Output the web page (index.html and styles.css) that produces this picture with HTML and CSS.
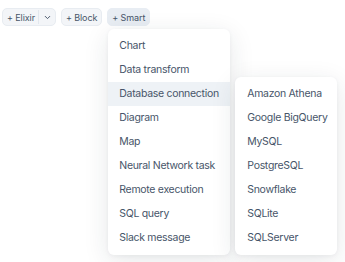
FILE: index.html
```html
<!DOCTYPE html>
<html lang="en">
<head>
    <meta charset="UTF-8">
    <meta name="viewport" content="width=device-width, initial-scale=1.0">
    <title>Insert cell</title>
    <link rel="stylesheet" href="styles.css">
</head>
<body>
    <div class="toolbar">
        <div class="btn split">
            <span class="btn-label">+ Elixir</span>
            <span class="divider"></span>
            <span class="chevron">
                <svg width="9" height="9" viewBox="0 0 24 24" fill="none" stroke="currentColor" stroke-width="2.6" stroke-linecap="round" stroke-linejoin="round"><polyline points="6 9 12 15 18 9"></polyline></svg>
            </span>
        </div>
        <div class="btn">+ Block</div>
        <div class="smart">
            <div class="btn active">+ Smart</div>
            <ul class="menu main-menu">
                <li>Chart</li>
                <li>Data transform</li>
                <li class="selected">Database connection</li>
                <li>Diagram</li>
                <li>Map</li>
                <li>Neural Network task</li>
                <li>Remote execution</li>
                <li>SQL query</li>
                <li>Slack message</li>
            </ul>
            <ul class="menu sub-menu">
                <li>Amazon Athena</li>
                <li>Google BigQuery</li>
                <li>MySQL</li>
                <li>PostgreSQL</li>
                <li>Snowflake</li>
                <li>SQLite</li>
                <li>SQLServer</li>
            </ul>
        </div>
    </div>
</body>
</html>
```

FILE: styles.css
```css
html, body {
    height: 100%;
}

body {
    font-family: 'Inter', sans-serif;
    margin: 0;
    padding: 8px 0 0 2px;
    box-sizing: border-box;
    min-height: 262px;
    background-color: #ffffff;
    color: #475569;
    overflow: hidden;
}

.toolbar {
    display: flex;
    align-items: flex-start;
    gap: 5px;
}

.btn {
    display: flex;
    align-items: center;
    height: 16px;
    padding: 0 4px;
    font-size: 9px;
    letter-spacing: -0.1px;
    color: #475569;
    background-color: #f3f5f8;
    border: 1px solid #e8ecf1;
    border-radius: 5px;
}

.btn.active {
    background-color: #e8edf3;
    border-color: #e8edf3;
}

.split {
    padding-right: 1px;
}

.divider {
    width: 1px;
    height: 14px;
    background-color: #e2e7ee;
    margin: 0 2px 0 3px;
}

.chevron {
    display: flex;
    align-items: center;
    padding: 0 2px;
    color: #475569;
}

.smart {
    position: relative;
}

.menu {
    position: absolute;
    z-index: 2;
    margin: 0;
    padding: 5px 0;
    list-style: none;
    background-color: #ffffff;
    border-radius: 6px;
    box-shadow: 0 6px 26px rgba(30, 41, 59, 0.11), 0 1px 4px rgba(30, 41, 59, 0.05);
    font-size: 10.5px;
    letter-spacing: -0.3px;
    color: #475569;
}

.menu li {
    height: 24px;
    line-height: 24px;
    padding: 0 11px;
    white-space: nowrap;
}

.menu li.selected {
    background-color: #eef2f6;
}

.main-menu {
    top: 21px;
    left: 1px;
    width: 122px;
}

.sub-menu {
    top: 69px;
    left: 128px;
    width: 102px;
}

.sub-menu li {
    padding-left: 12px;
}
```
